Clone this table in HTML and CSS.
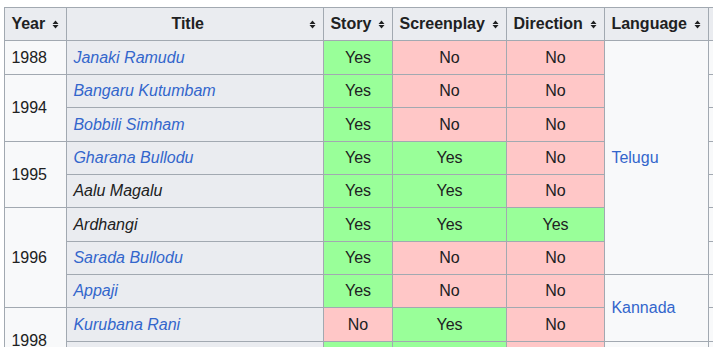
FILE: index.html
```html
<!DOCTYPE html>
<html lang="en">
<head>
<meta charset="utf-8">
<title>Filmography</title>
<link rel="stylesheet" href="styles.css">
</head>
<body>
<table class="wikitable">
  <colgroup>
    <col class="c-year">
    <col class="c-title">
    <col class="c-story">
    <col class="c-screen">
    <col class="c-dir">
    <col class="c-lang">
    <col class="c-ref">
  </colgroup>
  <thead>
    <tr>
      <th class="sort">Year<svg class="si" width="7" height="9" viewBox="0 0 7 9"><path d="M0.5 4h6L3.5 0.5z M0.5 5h6L3.5 8.5z"/></svg></th>
      <th class="sort">Title<svg class="si" width="7" height="9" viewBox="0 0 7 9"><path d="M0.5 4h6L3.5 0.5z M0.5 5h6L3.5 8.5z"/></svg></th>
      <th class="sort">Story<svg class="si" width="7" height="9" viewBox="0 0 7 9"><path d="M0.5 4h6L3.5 0.5z M0.5 5h6L3.5 8.5z"/></svg></th>
      <th class="sort">Screenplay<svg class="si" width="7" height="9" viewBox="0 0 7 9"><path d="M0.5 4h6L3.5 0.5z M0.5 5h6L3.5 8.5z"/></svg></th>
      <th class="sort">Direction<svg class="si" width="7" height="9" viewBox="0 0 7 9"><path d="M0.5 4h6L3.5 0.5z M0.5 5h6L3.5 8.5z"/></svg></th>
      <th class="sort">Language<svg class="si" width="7" height="9" viewBox="0 0 7 9"><path d="M0.5 4h6L3.5 0.5z M0.5 5h6L3.5 8.5z"/></svg></th>
      <th class="edge"></th>
    </tr>
  </thead>
  <tbody>
    <tr>
      <td>1988</td>
      <th class="rh"><a href="#">Janaki Ramudu</a></th>
      <td class="yes">Yes</td><td class="no">No</td><td class="no">No</td>
      <td rowspan="7"><a href="#">Telugu</a></td>
      <td class="edge"></td>
    </tr>
    <tr>
      <td rowspan="2">1994</td>
      <th class="rh"><a href="#">Bangaru Kutumbam</a></th>
      <td class="yes">Yes</td><td class="no">No</td><td class="no">No</td>
      <td class="edge"></td>
    </tr>
    <tr>
      <th class="rh"><a href="#">Bobbili Simham</a></th>
      <td class="yes">Yes</td><td class="no">No</td><td class="no">No</td>
      <td class="edge"></td>
    </tr>
    <tr>
      <td rowspan="2">1995</td>
      <th class="rh"><a href="#">Gharana Bullodu</a></th>
      <td class="yes">Yes</td><td class="yes">Yes</td><td class="no">No</td>
      <td class="edge"></td>
    </tr>
    <tr>
      <th class="rh">Aalu Magalu</th>
      <td class="yes">Yes</td><td class="yes">Yes</td><td class="no">No</td>
      <td class="edge"></td>
    </tr>
    <tr>
      <td rowspan="3">1996</td>
      <th class="rh">Ardhangi</th>
      <td class="yes">Yes</td><td class="yes">Yes</td><td class="yes">Yes</td>
      <td class="edge"></td>
    </tr>
    <tr>
      <th class="rh"><a href="#">Sarada Bullodu</a></th>
      <td class="yes">Yes</td><td class="no">No</td><td class="no">No</td>
      <td class="edge"></td>
    </tr>
    <tr>
      <th class="rh"><a href="#">Appaji</a></th>
      <td class="yes">Yes</td><td class="no">No</td><td class="no">No</td>
      <td rowspan="2"><a href="#">Kannada</a></td>
      <td class="edge"></td>
    </tr>
    <tr>
      <td rowspan="2">1998</td>
      <th class="rh"><a href="#">Kurubana Rani</a></th>
      <td class="no">No</td><td class="yes">Yes</td><td class="no">No</td>
      <td class="edge"></td>
    </tr>
    <tr>
      <th class="rh"></th>
      <td class="yes"></td><td class="yes"></td><td class="no"></td>
      <td></td>
      <td class="edge"></td>
    </tr>
  </tbody>
</table>
</body>
</html>
```

FILE: styles.css
```css
html {
  overflow: hidden;
  background: #ffffff;
}

body {
  margin: 0;
  padding: 7px 0 0 4px;
  font-family: "Liberation Sans", Arial, sans-serif;
  color: #202122;
}

.wikitable {
  border-collapse: collapse;
  table-layout: fixed;
  width: 786px;
  background: #f8f9fa;
  color: #202122;
  border: 1px solid #a2a9b1;
  font-size: 16px;
  line-height: 1.6;
}

.c-year { width: 62px; }
.c-title { width: 257px; }
.c-story { width: 69px; }
.c-screen { width: 114px; }
.c-dir { width: 98px; }
.c-lang { width: 104px; }
.c-ref { width: 82px; }

.wikitable th,
.wikitable td {
  border: 1px solid #a2a9b1;
  padding: 3.4px 6.4px;
  height: 25.6px;
  vertical-align: middle;
  white-space: nowrap;
  overflow: hidden;
}

.wikitable th {
  background: #eaecf0;
  text-align: center;
  font-weight: bold;
}

.wikitable th.sort {
  position: relative;
  padding-right: 21px;
}

.si {
  position: absolute;
  right: 7px;
  top: 50%;
  margin-top: -4px;
  fill: #202122;
}

.wikitable th.rh {
  text-align: left;
  font-weight: normal;
  font-style: italic;
}

.wikitable td.yes {
  background: #9f9;
  text-align: center;
}

.wikitable td.no {
  background: #ffc7c7;
  text-align: center;
}

a {
  color: #3366cc;
  text-decoration: none;
}
```
